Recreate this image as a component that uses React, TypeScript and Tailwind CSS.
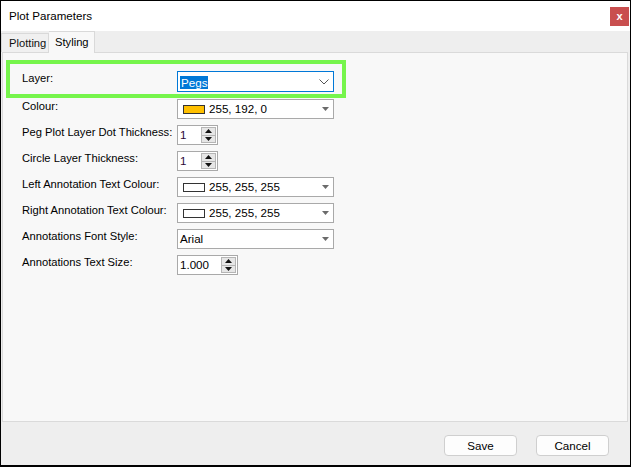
import { type ReactNode } from 'react'

const FONT = { fontFamily: '"Liberation Sans", Arial, sans-serif' }

function Label({ children }: { children: ReactNode }) {
  return (
    <div className="w-[155px] shrink-0 whitespace-nowrap pt-[1px] text-[11.2px] leading-[12px] text-black">
      {children}
    </div>
  )
}

function DropArrow() {
  return (
    <svg width="7" height="4" viewBox="0 0 7 4" className="mr-[4px] shrink-0">
      <path d="M0 0h7L3.5 4z" fill="#6b6b6b" />
    </svg>
  )
}

function ColourCombo({ swatch, value }: { swatch: string; value: string }) {
  return (
    <div className="flex h-[20px] w-[157px] items-center border border-[#a9a9a9] bg-white pl-[5px]">
      <div className="h-[9px] w-[22px] shrink-0 border border-[#333]" style={{ background: swatch }} />
      <span className="ml-[4px] flex-1 text-[11.6px] leading-[18px] text-black">{value}</span>
      <DropArrow />
    </div>
  )
}

function TextCombo({ value }: { value: string }) {
  return (
    <div className="flex h-[20px] w-[157px] items-center border border-[#a9a9a9] bg-white pl-[2px]">
      <span className="flex-1 text-[11.6px] leading-[18px] text-black">{value}</span>
      <DropArrow />
    </div>
  )
}

function Spinner({ value, width, dark }: { value: string; width: string; dark?: boolean }) {
  return (
    <div className={`flex h-[20px] items-center border border-[#a9a9a9] bg-white ${width}`}>
      <span className={`flex-1 pl-[2px] text-[11.6px] leading-[18px] ${dark ? 'text-[#2c0836]' : 'text-black'}`}>{value}</span>
      <div className="mr-[1px] flex h-[16px] w-[15px] flex-col border border-[#b5b5b5] bg-[#e6e6e6]">
        <div className="flex flex-1 items-center justify-center border-b border-[#b5b5b5]">
          <svg width="7" height="4" viewBox="0 0 7 4"><path d="M3.5 0L7 4H0z" fill="#111" /></svg>
        </div>
        <div className="flex flex-1 items-center justify-center">
          <svg width="7" height="4" viewBox="0 0 7 4"><path d="M0 0h7L3.5 4z" fill="#111" /></svg>
        </div>
      </div>
    </div>
  )
}

function Row({ label, children }: { label: string; children: ReactNode }) {
  return (
    <div className="flex h-[26px] items-start">
      <Label>{label}</Label>
      {children}
    </div>
  )
}

export default function App() {
  return (
    <div style={FONT} className="flex h-[467px] w-[631px] flex-col border border-b-2 border-black bg-[#eeeeee]">
      {/* Title bar */}
      <div className="flex h-[30px] shrink-0 items-center justify-between bg-white pl-[8px] pr-[1px]">
        <span className="text-[11.6px] text-black">Plot Parameters</span>
        <div className="flex h-[19px] w-[19px] items-center justify-center bg-[#c94f4f] text-[11px] font-bold leading-none text-white">
          x
        </div>
      </div>

      {/* Tabs */}
      <div className="flex h-[21px] shrink-0 items-end">
        <div className="flex h-[19px] w-[48px] items-center whitespace-nowrap border border-b-0 border-[#d9d9d9] bg-[#f0f0f0] pl-[7px] text-[11.2px] text-[#111]">
          Plotting
        </div>
        <div className="relative top-[1px] flex h-[22px] w-[46px] items-center whitespace-nowrap border border-b-0 border-l-0 border-[#d9d9d9] bg-[#f8f8f8] pl-[6px] text-[11.2px] text-black">
          Styling
        </div>
      </div>

      {/* Panel */}
      <div className="ml-[1px] mr-[2px] flex h-[370px] shrink-0 flex-col border border-[#dadada] bg-[#f8f8f8] pl-[3px]">
        <div className="mt-[7px] flex h-[38px] w-[340px] items-start border-4 border-[#76f54c] pl-[12px] pt-[7px]">
          <Label>Layer:</Label>
          <div className="flex h-[21px] w-[157px] items-center border border-[#0078d7] bg-white pl-[2px]">
            <span className="flex-1">
              <span className="bg-[#0078d7] px-[1px] text-[11.6px] leading-[13px] text-white">Pegs</span>
            </span>
            <svg width="10" height="6" viewBox="0 0 10 6" className="mr-[4px]">
              <path d="M0.5 0.5L5 5L9.5 0.5" stroke="#555" strokeWidth="1" fill="none" />
            </svg>
          </div>
        </div>

        <div className="mt-[1px] flex flex-col pl-[16px]">
          <Row label="Colour:">
            <ColourCombo swatch="#ffc000" value="255, 192, 0" />
          </Row>
          <Row label="Peg Plot Layer Dot Thickness:">
            <Spinner value="1" width="w-[41px]" dark />
          </Row>
          <Row label="Circle Layer Thickness:">
            <Spinner value="1" width="w-[41px]" dark />
          </Row>
          <Row label="Left Annotation Text Colour:">
            <ColourCombo swatch="#ffffff" value="255, 255, 255" />
          </Row>
          <Row label="Right Annotation Text Colour:">
            <ColourCombo swatch="#ffffff" value="255, 255, 255" />
          </Row>
          <Row label="Annotations Font Style:">
            <TextCombo value="Arial" />
          </Row>
          <Row label="Annotations Text Size:">
            <Spinner value="1.000" width="w-[61px]" />
          </Row>
        </div>
      </div>

      {/* Footer */}
      <div className="flex flex-1 items-start justify-end gap-[19px] pr-[21px] pt-[13px]">
        <button className="h-[21px] w-[73px] rounded-[4px] border border-[#cfcfcf] bg-[#fdfdfd] text-[11.6px] text-black">
          Save
        </button>
        <button className="h-[21px] w-[73px] rounded-[4px] border border-[#cfcfcf] bg-[#fdfdfd] text-[11.6px] text-black">
          Cancel
        </button>
      </div>
    </div>
  )
}
